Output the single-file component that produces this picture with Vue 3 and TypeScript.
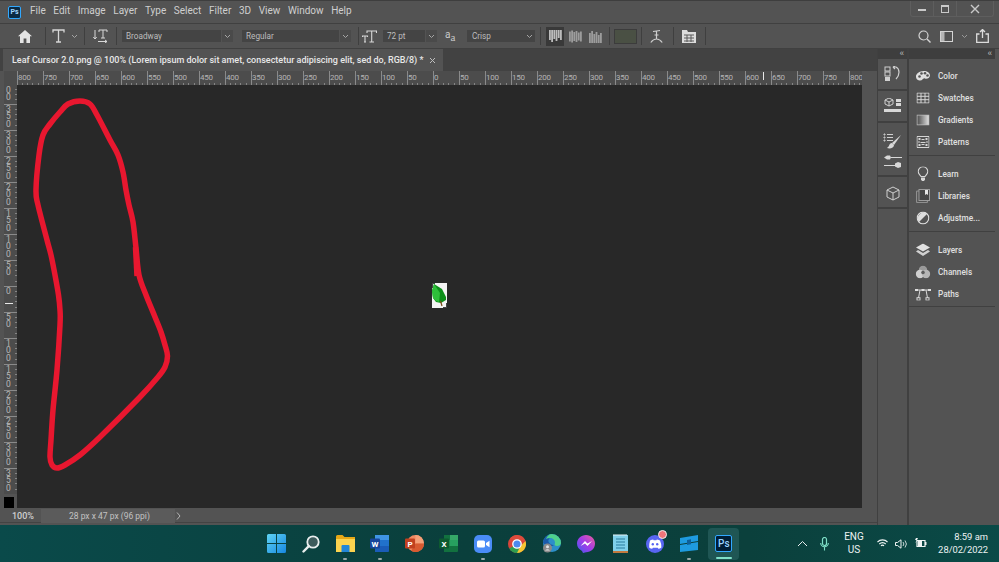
<template>
  <div class="screen">
    <div class="menubar">
      <div class="ps-logo">Ps</div>
      <nav class="menus">
        <span v-for="m in menus" :key="m">{{ m }}</span>
      </nav>
      <div class="winctl">
        <span class="wbtn"><i class="w-min"></i></span>
        <span class="wbtn"><i class="w-max"></i></span>
        <span class="wbtn wide">
          <svg width="10" height="10" viewBox="0 0 10 10"><path d="M1 1l8 8M9 1l-8 8" stroke="#c9c9c9" stroke-width="1.4" /></svg>
        </span>
      </div>
    </div>

    <div class="options">
      <svg class="o-home" width="14" height="13" viewBox="0 0 14 13"><path d="M7 0L0 6.200h2V13h3.600V8.400h2.800V13H12V6.200h2z" fill="#e4e4e4" /></svg>
      <i class="sep s1"></i>
      <svg class="o-t" width="13" height="14" viewBox="0 0 13 14"><path d="M1 3.500V1h11v2.500M6.500 1v12M4 13h5" fill="none" stroke="#d8d8d8" stroke-width="1.300" /></svg>
      <svg class="chev o-tc" width="7" height="5" viewBox="0 0 7 5"><path d="M1 1l2.500 2.500L6 1" fill="none" stroke="#a5a5a5" /></svg>
      <i class="sep s2"></i>
      <svg class="o-it" width="15" height="14" viewBox="0 0 15 14"><path d="M2 1v9M.3 8L2 10l1.700-2M6 3V1h8v2M10 1v8M8 9h4M5 12.500h9M12 11l2 1.500-2 1.500" fill="none" stroke="#d8d8d8" stroke-width="1" /></svg>
      <i class="sep s3"></i>
      <div class="drop d-font"><span>Broadway</span><b><svg width="7" height="5" viewBox="0 0 7 5"><path d="M1 1l2.500 2.500L6 1" fill="none" stroke="#a5a5a5" /></svg></b></div>
      <div class="drop d-style"><span>Regular</span><b><svg width="7" height="5" viewBox="0 0 7 5"><path d="M1 1l2.500 2.500L6 1" fill="none" stroke="#a5a5a5" /></svg></b></div>
      <i class="sep s4"></i>
      <svg class="o-tt" width="15" height="14" viewBox="0 0 15 14"><path d="M5 4V2h9.500v2M9.700 2v11M7.500 13h4.500M.5 8V7h5v1M3 7v6M2 13h2" fill="none" stroke="#d8d8d8" stroke-width="1.100" /></svg>
      <div class="drop d-size"><span>72 pt</span><b><svg width="7" height="5" viewBox="0 0 7 5"><path d="M1 1l2.500 2.500L6 1" fill="none" stroke="#a5a5a5" /></svg></b></div>
      <div class="aa"><span>a</span><span class="aa2">a</span></div>
      <div class="drop d-aa"><span>Crisp</span><b class="plain"><svg width="7" height="5" viewBox="0 0 7 5"><path d="M1 1l2.500 2.500L6 1" fill="none" stroke="#a5a5a5" /></svg></b></div>
      <i class="sep s5"></i>
      <div v-for="(a, i) in aligns" :key="a.name" class="align" :class="{ on: i === 0 }">
        <svg width="13" height="13" viewBox="0 0 13 13">
          <rect v-for="(h, j) in bars" :key="j" :x="j * 2.2" :y="(13 - h) * a.pos" width="1.800" :height="h" :fill="i === 0 ? '#bcbcbc' : '#9c9c9c'" />
        </svg>
      </div>
      <i class="sep s6"></i>
      <div class="swatch"></div>
      <i class="sep s7"></i>
      <svg class="o-warp" width="13" height="15" viewBox="0 0 13 15"><path d="M3 2.500l7-1M6.500 2v8M.8 13.500C3 10.500 5 10 6.500 10s3.500.5 5.700 3.500M4.500 6h4" fill="none" stroke="#cfcfcf" stroke-width="1.200" /></svg>
      <i class="sep s8"></i>
      <svg class="o-pan" width="14" height="13" viewBox="0 0 14 13"><path d="M0 0h5l1 2h8v11H0z" fill="#dcdcdc" /><path d="M2 5h10M2 8h10M2 11h10M5 5v7M9 5v7" stroke="#5a5a5a" /></svg>
      <i class="sep s9"></i>
      <div class="o-right">
        <svg width="13" height="13" viewBox="0 0 13 13"><circle cx="5.500" cy="5.500" r="4.500" fill="none" stroke="#d4d4d4" stroke-width="1.200" /><path d="M9 9l3.500 3.500" stroke="#d4d4d4" stroke-width="1.400" /></svg>
        <svg class="wk" width="13" height="11" viewBox="0 0 13 11"><rect x=".5" y=".5" width="12" height="10" fill="none" stroke="#d4d4d4" /><rect x="1" y="1" width="3.500" height="9" fill="#b5b5b5" /></svg>
        <svg class="wkc" width="7" height="5" viewBox="0 0 7 5"><path d="M1 1l2.500 2.500L6 1" fill="none" stroke="#999" /></svg>
        <svg class="share" width="13" height="14" viewBox="0 0 13 14"><path d="M3.500 5H.7v8.300h11.600V5H9.500M6.500 9V1M4 3l2.500-2.500L9 3" fill="none" stroke="#dcdcdc" stroke-width="1.300" /></svg>
      </div>
    </div>

    <div class="workspace">
      <div class="docarea">
        <div class="tabbar">
          <div class="tab">
            <span>Leaf Cursor 2.0.png @ 100% (Lorem ipsum dolor sit amet, consectetur adipiscing elit, sed do, RGB/8) *</span>
            <svg width="7" height="7" viewBox="0 0 7 7"><path d="M1 1l5 5M6 1L1 6" stroke="#bdbdbd" /></svg>
          </div>
        </div>
        <div class="rulerrow">
          <div class="corner"></div>
          <div class="hruler">
            <span v-for="(n, i) in hLabels" :key="i" class="hcell">{{ n }}</span>
            <i class="hmark"></i>
          </div>
        </div>
        <div class="viewrow">
          <div class="vruler">
            <div class="vticks">
              <div class="vfirst"><span>00</span></div>
              <div v-for="(n, i) in vLabels" :key="i" class="vcell">
                <span>{{ n }}</span>
              </div>
              <i class="vmark"></i>
            </div>
            <div class="fg"></div>
          </div>
          <div class="canvas">
            <svg class="scribble" width="845" height="423" viewBox="17 85 845 423">
              <path :d="curve" fill="none" stroke="#e8172f" stroke-width="5.500" stroke-linejoin="round" />
              <path d="M135.500 247l1.500 29" stroke="#e8172f" stroke-width="5.500" />
            </svg>
            <svg class="cursor-img" width="15" height="25" viewBox="0 0 15 25">
              <rect width="15" height="25" fill="#f4f4f4" />
              <path d="M0 0v5h1V1h2V0zM14 20h1v5h-4v-1h3z" fill="#444" />
              <path d="M2 1l8 5 4 8v3l-5 3-5-1-3-4-1-7z" fill="#0d8f1a" />
              <path d="M2 1l6 9-1 9-3-1-3-3-1-7z" fill="#2ebf3a" />
              <path d="M8.500 18l1.500 5" stroke="#7a4a18" stroke-width="1.200" />
            </svg>
          </div>
          <div class="vgutter"></div>
        </div>
        <div class="statusbar">
          <span class="zoom">100%</span>
          <div class="info">28 px x 47 px (96 ppi)</div>
          <svg width="5" height="8" viewBox="0 0 5 8"><path d="M1 .5L4 4 1 7.500" fill="none" stroke="#b5b5b5" /></svg>
        </div>
      </div>

      <aside class="dock">
        <div class="collapse"><span>‹‹</span></div>
        <div class="icongroup g1">
          <svg width="18" height="16" viewBox="0 0 18 16">
            <rect x="1" y="1" width="5" height="4" fill="none" stroke="#d0d0d0" />
            <rect x="1" y="6" width="5" height="4" fill="none" stroke="#d0d0d0" />
            <rect x="1" y="11" width="5" height="4" fill="#d0d0d0" />
            <path d="M9 1h3c4 2 4 8 0 12M9 1l2-1M9 1l2 2" fill="none" stroke="#d0d0d0" stroke-width="1.200" />
          </svg>
        </div>
        <div class="icongroup g2">
          <svg width="19" height="16" viewBox="0 0 19 16">
            <path d="M6 0l4 2v4L6 8 2 6V2zM2 2l4 2 4-2M6 4v4" fill="none" stroke="#d0d0d0" />
            <rect x="13" y="1" width="5" height="3" fill="#d8d8d8" />
            <rect x="13" y="5" width="5" height="3" fill="#d8d8d8" />
            <rect x="1" y="11" width="17" height="3" fill="#d8d8d8" />
          </svg>
        </div>
        <div class="icongroup g3">
          <svg width="19" height="16" viewBox="0 0 19 16">
            <path d="M1 1h1v1H1zM1 4h1v1H1zM1 7h1v1H1zM4 1.500h6M4 4.500h6M4 7.500h6" stroke="#d0d0d0" />
            <path d="M18 2l-9 8 2 2z" fill="#d8d8d8" />
            <path d="M9 10c-2 0-3 2-3 3l-2 2c3 1 7 0 7-3z" fill="#d8d8d8" />
          </svg>
          <svg width="19" height="15" viewBox="0 0 19 15">
            <path d="M1 3.500l3-2h3l1 2-1 2H4zM8 3h11v1H8zM1 11h11v1H1z" fill="#d8d8d8" />
            <path d="M12 9.500l3-1.500 3 1v4l-3 1-3-1.500z" fill="#d8d8d8" />
          </svg>
        </div>
        <div class="icongroup g4">
          <svg width="14" height="15" viewBox="0 0 14 15"><path d="M7 1l6 3v7l-6 3-6-3V4zM1 4l6 3 6-3M7 7v7" fill="none" stroke="#d0d0d0" /></svg>
        </div>
        <div class="icongroup grow"></div>
      </aside>

      <aside class="panels">
        <div class="collapse"><span>‹‹</span></div>
        <section class="pgroup p1">
          <div class="prow">
            <svg width="15" height="11" viewBox="0 0 15 11"><path d="M8 .5c4 0 6.500 2 6.500 4.500S11 9 9.500 8 7 10.500 4 10 .5 7.500.5 5.500 4 .5 8 .5z" fill="#e0e0e0" /><circle cx="4" cy="6" r="1.300" fill="#555" /><circle cx="6" cy="3" r="1.300" fill="#555" /><circle cx="9.500" cy="2.800" r="1.300" fill="#555" /><circle cx="12" cy="5" r="1.300" fill="#555" /></svg>
            <span>Color</span>
          </div>
          <div class="prow">
            <svg width="13" height="11" viewBox="0 0 13 11"><path d="M.5.500h12v10H.500zM.5 3.800h12M.5 7.200h12M4.500.5v10M8.500.5v10" fill="none" stroke="#d5d5d5" /></svg>
            <span>Swatches</span>
          </div>
          <div class="prow">
            <svg width="13" height="11" viewBox="0 0 13 11"><defs><linearGradient id="gr" x1="0" x2="1"><stop offset="0" stop-color="#4a4a4a" /><stop offset="1" stop-color="#e2e2e2" /></linearGradient></defs><rect x=".5" y=".5" width="12" height="10" fill="url(#gr)" stroke="#bcbcbc" /></svg>
            <span>Gradients</span>
          </div>
          <div class="prow">
            <svg width="13" height="12" viewBox="0 0 13 12"><path d="M.5.500h12v11H.500z" fill="none" stroke="#d5d5d5" /><path d="M2 2h2v2H2zM5 3h3v1H5zM9 2h2v2H9zM2 5h1v2H2zM4 6h5v1H4zM10 5h1v2h-1zM2 8h2v2H2zM5 8h3v1H5zM9 8h2v2H9z" fill="#d5d5d5" /></svg>
            <span>Patterns</span>
          </div>
        </section>
        <section class="pgroup p2">
          <div class="prow">
            <svg width="11" height="15" viewBox="0 0 11 15"><path d="M3.500 10C2 8 .7 7.200.7 5a4.800 4.800 0 0 1 9.600 0C10.300 7.200 9 8 7.500 10z" fill="none" stroke="#d8d8d8" stroke-width="1.100" /><path d="M3.500 11h4v2l-1 1.500h-2l-1-1.500z" fill="#d8d8d8" /></svg>
            <span>Learn</span>
          </div>
          <div class="prow">
            <svg width="14" height="14" viewBox="0 0 14 14"><rect x=".5" y="2" width="11" height="11.500" rx="1" fill="none" stroke="#8f8f8f" stroke-width="1.200" /><rect x="3" y=".5" width="10.500" height="11" fill="#454545" stroke="#9c9c9c" /><path d="M9 1h3v5l-1.500-1L9 6z" fill="#e4e4e4" /></svg>
            <span>Libraries</span>
          </div>
          <div class="prow">
            <svg width="13" height="13" viewBox="0 0 13 13"><circle cx="6.500" cy="6.500" r="5.800" fill="none" stroke="#dedede" stroke-width="1.200" /><path d="M10.500 2.500a5.700 5.700 0 0 0-8 8z" fill="#dedede" /></svg>
            <span>Adjustme...</span>
          </div>
        </section>
        <section class="pgroup p3">
          <div class="prow">
            <svg width="14" height="13" viewBox="0 0 14 13"><path d="M7 0l7 4-7 4-7-4z" fill="#e0e0e0" /><path d="M2 6.500L0 8l7 4.500L14 8l-2-1.500-5 3z" fill="#d0d0d0" /></svg>
            <span>Layers</span>
          </div>
          <div class="prow">
            <svg width="15" height="13" viewBox="0 0 15 13"><circle cx="7.500" cy="4.500" r="4.200" fill="#9a9a9a" /><circle cx="4.500" cy="8.500" r="4.200" fill="#cfcfcf" /><circle cx="10.500" cy="8.500" r="4.200" fill="#b5b5b5" /><circle cx="7.500" cy="7" r="1.800" fill="#5d5d5d" /></svg>
            <span>Channels</span>
          </div>
          <div class="prow">
            <svg width="17" height="13" viewBox="0 0 17 13"><path d="M2 2.500h13M5.500 2.500L4 10.500M11.500 2.500l1.500 8" fill="none" stroke="#d8d8d8" /><path d="M.5 1.500h3v2h-3zM7 1.500h3v2H7zM13.500 1.500h3v2h-3z" fill="#e0e0e0" /><rect x="2.500" y="10.200" width="3" height="2.500" fill="none" stroke="#d8d8d8" /><rect x="11.500" y="10.200" width="3" height="2.500" fill="none" stroke="#d8d8d8" /></svg>
            <span>Paths</span>
          </div>
        </section>
        <section class="pgroup grow"></section>
      </aside>
    </div>

    <footer class="taskbar">
      <div class="apps">
        <div class="app">
          <svg width="19" height="19" viewBox="0 0 19 19"><defs><linearGradient id="win" x1="0" y1="0" x2="1" y2="1"><stop offset="0" stop-color="#5fd4f4" /><stop offset="1" stop-color="#1787e0" /></linearGradient></defs><path d="M0 1.500Q0 0 1.500 0H9v9H0zM10 0h7.500Q19 0 19 1.500V9h-9zM0 10h9v9H1.500Q0 19 0 17.500zM10 10h9v7.500q0 1.500-1.500 1.500H10z" fill="url(#win)" /></svg>
        </div>
        <div class="app">
          <svg width="18" height="18" viewBox="0 0 18 18"><circle cx="11" cy="7" r="5.700" fill="#3d5b5c" stroke="#e9eeee" stroke-width="1.800" /><path d="M6.800 11.200L1.500 16.500" stroke="#e9eeee" stroke-width="2.400" stroke-linecap="round" /></svg>
        </div>
        <div class="app dot">
          <svg width="19" height="17" viewBox="0 0 19 17"><path d="M0 1.500Q0 0 1.500 0h5l2 2H19v3H0z" fill="#e6a817" /><path d="M0 4h19v13H0z" fill="#fcd34f" /><path d="M6.500 10h6q1 0 1 1v6h-8v-6q0-1 1-1z" fill="#2186d8" /></svg>
        </div>
        <div class="app dot">
          <svg width="19" height="17" viewBox="0 0 19 17"><path d="M5 0h13a1 1 0 0 1 1 1v15a1 1 0 0 1-1 1H5z" fill="#1a5cb8" /><path d="M5 0h14v5H5z" fill="#3f95e4" /><path d="M5 5h14v6H5z" fill="#2172cc" /><rect y="3.500" width="10" height="10" rx="1" fill="#16459a" /><text x="5" y="11.500" class="ti">W</text></svg>
        </div>
        <div class="app">
          <svg width="19" height="17" viewBox="0 0 19 17"><circle cx="10.500" cy="8.500" r="8.500" fill="#ee8a63" /><path d="M10.500 0a8.500 8.500 0 0 1 8.500 8.500h-8.500z" fill="#f4a078" /><path d="M10.500 8.500H19A8.500 8.500 0 0 1 6 15.700z" fill="#d85a30" /><rect y="3.500" width="10" height="10" rx="1" fill="#c1401f" /><text x="5" y="11.500" class="ti">P</text></svg>
        </div>
        <div class="app">
          <svg width="19" height="17" viewBox="0 0 19 17"><path d="M5 0h13a1 1 0 0 1 1 1v15a1 1 0 0 1-1 1H5z" fill="#12713f" /><path d="M11 0h8v5h-8z" fill="#35a868" /><path d="M5 5h6v6H5z" fill="#1d8a50" /><path d="M11 5h8v6h-8z" fill="#27a05f" /><rect y="3.500" width="10" height="10" rx="1" fill="#0d5a30" /><text x="5" y="11.500" class="ti">X</text></svg>
        </div>
        <div class="app dot">
          <svg width="18" height="18" viewBox="0 0 18 18"><rect width="18" height="18" rx="5" fill="#4a8cf7" /><rect x="3" y="5.500" width="8" height="7" rx="1.500" fill="#fff" /><path d="M12 8l3.500-2.200v6.400L12 10z" fill="#fff" /></svg>
        </div>
        <div class="app">
          <svg width="18" height="18" viewBox="0 0 18 18"><circle cx="9" cy="9" r="9" fill="#d8453a" /><path d="M9 9L1.200 13.500A9 9 0 0 0 9 18c1 0 2-.2 3-.5z" fill="#2f9e4f" /><path d="M9 0a9 9 0 0 1 8.500 6H9L2 4A9 9 0 0 1 9 0z" fill="#dd4b3c" /><path d="M17.500 6A9 9 0 0 1 9 18l3.500-7z" fill="#f5c533" /><circle cx="9" cy="9" r="4.200" fill="#4b8af0" stroke="#fff" stroke-width="1.300" /></svg>
        </div>
        <div class="app">
          <svg width="20" height="19" viewBox="0 0 20 19"><circle cx="10" cy="9" r="9" fill="#2c8fc9" /><path d="M1 9a9 9 0 0 1 17-4c-3-2-9-3-11 0s1 5 4 6-6 2-10-2z" fill="#1b5aa8" /><path d="M10 0a9 9 0 0 1 9 9c0 2-2 3-4 3s-3-1-2-3c0-5-5-6-9-4 1-3 3-5 6-5z" fill="#4fd08c" /><circle cx="5.500" cy="14" r="4.500" fill="#8a8a8a" /><circle cx="5.500" cy="12.800" r="1.500" fill="#e4e4e4" /><path d="M3 16.500q2.500-2.500 5 0" fill="#e4e4e4" /></svg>
        </div>
        <div class="app">
          <svg width="18" height="18" viewBox="0 0 18 18"><defs><linearGradient id="ms" x1="0" y1="1" x2="1" y2="0"><stop offset="0" stop-color="#3f5bf0" /><stop offset=".5" stop-color="#a23ce8" /><stop offset="1" stop-color="#ef5f9a" /></linearGradient></defs><path d="M9 0c5 0 9 3.700 9 8.600s-4 8.600-9 8.600l-3 .8-1-2C2 14.500 0 12 0 8.600 0 3.700 4 0 9 0z" fill="url(#ms)" /><path d="M3.500 11L8 6l2.500 2.500L15 6l-4.500 5L8 8.500z" fill="#fff" /></svg>
        </div>
        <div class="app">
          <svg width="15" height="19" viewBox="0 0 15 19"><rect y="1" width="15" height="16" fill="#7fd0ea" /><rect y="17" width="15" height="2" fill="#c27a3f" /><path d="M3 5h9M3 8h9M3 11h9M3 14h9" stroke="#2b7d9e" /><path d="M1 0v2M3 0v2M5 0v2M7 0v2M9 0v2M11 0v2M13 0v2" stroke="#e8f4f8" /></svg>
        </div>
        <div class="app">
          <span class="badge"></span>
          <svg width="18" height="18" viewBox="0 0 18 18"><circle cx="9" cy="9" r="9" fill="#5865f2" /><path d="M4 5.500q2-1 3.200-1l.4.700h2.800l.4-.7q1.200 0 3.200 1 1.600 3.500 1.400 7-1.500 1.200-3 1.300l-.7-1.100H6.900l-.7 1.100q-1.500-.1-3-1.300Q3 9 4 5.500z" fill="#fff" /><circle cx="6.800" cy="9.300" r="1.200" fill="#5865f2" /><circle cx="11.200" cy="9.300" r="1.200" fill="#5865f2" /></svg>
        </div>
        <div class="app dot">
          <svg width="18" height="17" viewBox="0 0 18 17"><path d="M0 3l18-3v6L9 7.500 0 9zM0 10l9-1.500 9-1.500v8L0 17z" fill="#1e9be0" /><path d="M7 5l4-.7v5L7 10z" fill="#0d5f9a" /></svg>
        </div>
        <div class="app active">
          <div class="ps-task">Ps</div>
          <i class="underline"></i>
        </div>
      </div>
      <div class="tray">
        <svg class="t-chev" width="11" height="7" viewBox="0 0 11 7"><path d="M1 6l4.500-4.500L10 6" fill="none" stroke="#e8eeee" /></svg>
        <svg class="t-mic" width="9" height="14" viewBox="0 0 9 14"><rect x="2.500" y=".5" width="4" height="8" rx="2" fill="none" stroke="#7fe0c8" stroke-width="1.200" /><path d="M.7 6a3.800 3.800 0 0 0 7.600 0M4.500 10v3.500" fill="none" stroke="#7fe0c8" stroke-width="1.100" /></svg>
        <div class="lang"><span>ENG</span><span>US</span></div>
        <svg class="t-wifi" width="11" height="9" viewBox="0 0 11 9"><path d="M.5 3a7 7 0 0 1 10 0M2.300 5a4.500 4.500 0 0 1 6.400 0M4 6.800a2 2 0 0 1 3 0" fill="none" stroke="#f0f4f4" stroke-width="1.100" /></svg>
        <svg class="t-vol" width="12" height="10" viewBox="0 0 12 10"><path d="M.5 3.500h2L6 .8v8.400L2.500 6.500h-2z" fill="none" stroke="#f0f4f4" /><path d="M8 3a3 3 0 0 1 0 4M10 1.500a5.500 5.500 0 0 1 0 7" fill="none" stroke="#dfe6e6" stroke-width=".9" /></svg>
        <svg class="t-bat" width="13" height="11" viewBox="0 0 13 11"><path d="M3 2.500h8v6H3z" fill="none" stroke="#f0f4f4" stroke-width="1.200" /><rect x="11" y="4" width="1.500" height="3" fill="#f0f4f4" /><path d="M2 0L1 2h2L1 5l3-3H3l1-2z" fill="#f0f4f4" /><rect x="4" y="3" width="4" height="5" fill="#f0f4f4" /></svg>
        <div class="clock"><span>8:59 am</span><span>28/02/2022</span></div>
      </div>
    </footer>
  </div>
</template>

<script setup lang="ts">
import { computed } from "vue";

const menus = ["File", "Edit", "Image", "Layer", "Type", "Select", "Filter", "3D", "View", "Window", "Help"];

const aligns = [
  { name: "left", pos: 0 },
  { name: "center", pos: 0.5 },
  { name: "right", pos: 1 },
];
const bars = [10, 12, 9, 11, 8, 10];

const hLabels: number[] = [];
for (let v = -800; v <= 800; v += 50) hLabels.push(Math.abs(v));

const vLabels = ["350", "300", "250", "200", "150", "100", "50", "0", "50", "100", "150", "200", "250", "300", "350"];

// hand-traced points of the red loop, in page coordinates
const points: [number, number][] = [
  [80, 101], [90, 104], [97, 115], [110, 140], [118, 155], [123, 172], [126, 190],
  [129, 205], [133, 222], [136, 248], [139, 275], [146, 295], [155, 317], [161, 332],
  [165, 345], [167.5, 356], [165, 367], [158, 377], [140, 397], [100, 437], [80, 455],
  [65, 465], [57, 468], [52, 465], [50, 457], [51, 440], [53, 410], [57, 370],
  [60, 325], [60, 310], [58.5, 295], [55, 275], [51, 255], [47, 240], [38, 205],
  [36, 190], [39, 155], [43, 135], [50, 124], [60, 112], [68, 104],
];

const curve = computed(() => {
  const n = points.length;
  let d = `M${points[0][0]} ${points[0][1]}`;
  for (let i = 0; i < n; i++) {
    const [p0, p1, p2, p3] = [points[(i + n - 1) % n], points[i], points[(i + 1) % n], points[(i + 2) % n]];
    const c1 = [p1[0] + (p2[0] - p0[0]) / 6, p1[1] + (p2[1] - p0[1]) / 6];
    const c2 = [p2[0] - (p3[0] - p1[0]) / 6, p2[1] - (p3[1] - p1[1]) / 6];
    d += `C${c1[0]} ${c1[1]} ${c2[0]} ${c2[1]} ${p2[0]} ${p2[1]}`;
  }
  return d + "Z";
});
</script>

<style>
html,
body {
  margin: 0;
  overflow: hidden;
}
</style>

<style scoped>
.screen {
  width: 999px;
  height: 562px;
  display: flex;
  flex-direction: column;
  overflow: hidden;
  background: #535353;
  font-family: Roboto, "Open Sans", sans-serif;
  color: #d6d6d6;
}

/* menu bar */
.menubar {
  height: 23px;
  flex: none;
  display: flex;
  align-items: flex-start;
  background: #535353;
  box-sizing: border-box;
  border-top: 1px solid #3e3e3e;
}
.ps-logo {
  width: 11px;
  height: 11px;
  margin: 5px 0 0 8px;
  background: #0b2b45;
  border: 1px solid #31a8ff;
  border-radius: 2px;
  font-size: 7px;
  line-height: 10px;
  text-align: center;
  font-weight: 700;
  color: #a8d8ff;
}
.menus {
  display: flex;
  gap: 7.600px;
  margin: 3px 0 0 9px;
  font-size: 10px;
  line-height: 14px;
  color: #cfcfcf;
}
.winctl {
  margin-left: auto;
  margin-right: 5px;
  display: flex;
  height: 15px;
  border: 1px solid #5e5e5e;
  border-top: 0;
  border-radius: 0 0 3px 3px;
}
.wbtn {
  width: 22px;
  display: flex;
  align-items: center;
  justify-content: center;
  border-right: 1px solid #5e5e5e;
}
.wbtn.wide {
  width: 36px;
  border-right: 0;
}
.w-min {
  width: 8px;
  height: 2px;
  margin-top: 3px;
  background: #c9c9c9;
}
.w-max {
  width: 6px;
  height: 5px;
  border: 1px solid #c9c9c9;
  border-top-width: 2px;
}

/* options bar */
.options {
  height: 26px;
  flex: none;
  box-sizing: border-box;
  display: flex;
  align-items: center;
  background: #535353;
  border-top: 1px solid #404040;
  border-bottom: 1px solid #404040;
}
.sep {
  width: 1px;
  height: 18px;
  background: #3f3f3f;
  flex: none;
}
.o-home { margin-left: 18px; }
.s1 { margin-left: 13px; }
.o-t { margin-left: 6px; }
.o-tc { margin-left: 6px; }
.s2 { margin-left: 6px; }
.o-it { margin-left: 8px; }
.s3 { margin-left: 8px; }
.drop {
  height: 12px;
  display: flex;
  align-items: center;
  flex: none;
  gap: 1px;
  font-size: 8.200px;
  color: #bdbdbd;
}
.drop span {
  flex: 1;
  height: 100%;
  line-height: 12px;
  padding-left: 4px;
  background: #444;
}
.drop b {
  width: 11px;
  height: 100%;
  background: #4a4a4a;
  display: flex;
  align-items: center;
  justify-content: center;
}
.drop b.plain {
  background: #444;
  margin-left: -1px;
}
.d-font { width: 111px; margin-left: 5px; }
.d-style { width: 109px; margin-left: 9px; }
.s4 { margin-left: 7px; }
.o-tt { margin-left: 3px; }
.d-size { width: 54px; margin-left: 6px; }
.aa {
  margin-left: 8px;
  width: 16px;
  font-size: 10px;
  color: #c9c9c9;
  line-height: 12px;
  display: flex;
}
.aa2 {
  margin-top: 2px;
  font-family: "Liberation Serif", serif;
  font-size: 11px;
}
.d-aa { width: 68px; margin-left: 6px; }
.d-aa span { padding-left: 5px; }
.s5 { margin-left: 5px; }
.align {
  width: 18px;
  height: 19px;
  margin-left: 2px;
  display: flex;
  align-items: center;
  justify-content: center;
}
.align.on { background: #393939; margin-left: 5px; }
.s6 { margin-left: 5px; }
.swatch {
  width: 21px;
  height: 13px;
  margin-left: 4px;
  background: #4a5044;
  border: 1px solid #3c3c3c;
  flex: none;
}
.s7 { margin-left: 4px; }
.o-warp { margin-left: 8px; }
.s8 { margin-left: 10px; }
.o-pan { margin-left: 8px; }
.s9 { margin-left: 9px; }
.o-right {
  margin-left: auto;
  margin-right: 10px;
  display: flex;
  align-items: center;
}
.wk { margin-left: 9px; }
.wkc { margin-left: 8px; }
.share { margin-left: 8px; }

/* document area */
.workspace {
  flex: 1;
  min-height: 0;
  display: flex;
  background: #404040;
}
.docarea {
  width: 877px;
  flex: none;
  display: flex;
  flex-direction: column;
  background: #535353;
}
.tabbar {
  height: 22px;
  flex: none;
  background: #424242;
  padding-left: 3px;
}
.tab {
  width: 440px;
  height: 22px;
  box-sizing: border-box;
  padding-left: 9px;
  display: flex;
  align-items: center;
  gap: 6px;
  background: #535353;
  font-size: 9px;
  font-weight: 500;
  color: #e8e8e8;
  white-space: nowrap;
}
.rulerrow {
  height: 14px;
  flex: none;
  display: flex;
  padding-left: 4px;
}
.corner {
  width: 13px;
  flex: none;
  background: #4c4c4c;
}
.hruler {
  position: relative;
  width: 845px;
  display: flex;
  overflow: hidden;
  background-color: #4c4c4c;
}
.hcell {
  width: 26px;
  flex: none;
  box-sizing: border-box;
  border-left: 1px solid #8a8a8a;
  font-size: 8px;
  letter-spacing: -0.2px;
  line-height: 14px;
  color: #b4b4b4;
  background: repeating-linear-gradient(90deg, transparent 0 4px, #858585 4px 5px, transparent 5px 5.200px) 0 12px / 100% 2px no-repeat;
}
.hmark {
  position: absolute;
  left: 746px;
  top: 1px;
  width: 1px;
  height: 8px;
  background: #e8e8e8;
}
.viewrow {
  flex: 1;
  min-height: 0;
  display: flex;
  padding-left: 4px;
}
.vruler {
  width: 13px;
  flex: none;
  display: flex;
  flex-direction: column;
}
.vticks {
  position: relative;
  height: 409px;
  flex: none;
  overflow: hidden;
  background: #4c4c4c;
}
.vmark {
  position: absolute;
  left: 1px;
  top: 218px;
  width: 8px;
  height: 1px;
  background: #e8e8e8;
}
.vfirst,
.vcell {
  box-sizing: border-box;
  font-size: 8.500px;
  line-height: 7.400px;
  color: #b8b8b8;
  padding-left: 2px;
  background: repeating-linear-gradient(180deg, transparent 0 4px, #858585 4px 5px, transparent 5px 5.200px) right 0 / 2px 100% no-repeat;
}
.vfirst span,
.vcell span {
  display: block;
  width: 6px;
  word-break: break-all;
}
.vfirst {
  height: 19px;
  padding-top: 2px;
}
.vcell {
  height: 26px;
  border-top: 1px solid #8a8a8a;
  padding-top: 1px;
}
.fg {
  flex: 1;
  background: linear-gradient(#535353 3px, #000 3px);
  width: 10px;
}
.canvas {
  width: 845px;
  flex: none;
  position: relative;
  background: #282828;
}
.scribble {
  position: absolute;
  left: 0;
  top: 0;
}
.cursor-img {
  position: absolute;
  left: 415px;
  top: 198px;
}
.vgutter {
  flex: 1;
}
.statusbar {
  height: 17px;
  flex: none;
  box-sizing: border-box;
  padding-bottom: 2px;
  display: flex;
  align-items: center;
  box-shadow: inset 0 -2px 0 #535353, inset 0 -3px 0 #434343;
  font-size: 8.500px;
  color: #cfcfcf;
}
.zoom {
  width: 41px;
  padding-left: 12px;
  box-sizing: border-box;
  flex: none;
  font-size: 9px;
  font-weight: 500;
}
.info {
  width: 134px;
  height: 14px;
  box-sizing: border-box;
  padding-left: 28px;
  line-height: 14px;
  background: #5b5b5b;
  color: #c2c2c2;
}
.statusbar svg {
  margin-left: 1px;
}

/* right docks */
.dock {
  width: 29px;
  flex: none;
  margin-left: 1px;
  display: flex;
  flex-direction: column;
  gap: 2px;
}
.panels {
  width: 86px;
  flex: none;
  margin-left: 2px;
  display: flex;
  flex-direction: column;
  gap: 1px;
  box-shadow: 4px 0 0 #535353;
}
.collapse {
  height: 10px;
  flex: none;
  background: #3e3e3e;
  font-size: 9px;
  line-height: 8px;
  text-align: right;
  padding-right: 4px;
  color: #bdbdbd;
  letter-spacing: -1px;
}
.dock .collapse {
  margin-bottom: -2px;
}
.panels .collapse {
  margin-bottom: -1px;
}
.icongroup {
  background: #535353;
  box-sizing: border-box;
  display: flex;
  flex-direction: column;
  align-items: center;
  justify-content: center;
  gap: 5px;
}
.g1 { height: 30px; }
.g2 { height: 30px; }
.g3 { height: 52px; padding-top: 4px; }
.g4 { height: 30px; padding-top: 3px; }
.grow { flex: 1; }
.pgroup {
  background: #535353;
  box-sizing: border-box;
}
.p1 { height: 96px; padding-top: 6px; }
.p2 { height: 75px; padding-top: 7px; }
.p3 { height: 74px; padding-top: 7px; }
.prow {
  height: 22px;
  display: flex;
  align-items: center;
  font-size: 8.200px;
  font-weight: 500;
  color: #e0e0e0;
  position: relative;
  padding-left: 29px;
}
.prow svg {
  position: absolute;
  left: 14px;
  top: 50%;
  transform: translate(-50%, -50%);
}

/* taskbar */
.taskbar {
  height: 37px;
  flex: none;
  position: relative;
  display: flex;
  align-items: center;
  background: linear-gradient(90deg, #0a4a4a 0%, #0a3f3c 45%, #0b403c 75%, #0a4a47 100%);
  color: #eef3f3;
}
.apps {
  display: flex;
  margin-left: 259.500px;
}
.app {
  width: 34.400px;
  height: 37px;
  display: flex;
  align-items: center;
  justify-content: center;
  position: relative;
}
.dot::after {
  content: "";
  position: absolute;
  left: 50%;
  bottom: 2px;
  width: 4px;
  height: 2px;
  margin-left: -2px;
  border-radius: 1px;
  background: #9aa9a9;
}
.ti {
  font: 700 8px Roboto, sans-serif;
  fill: #fff;
  text-anchor: middle;
}
.badge {
  position: absolute;
  right: 5px;
  top: 5px;
  width: 9px;
  height: 9px;
  border-radius: 50%;
  background: #f0757a;
  border: 1px solid #f0f0f0;
  z-index: 1;
  box-sizing: border-box;
}
.active::before {
  content: "";
  position: absolute;
  inset: 3px 2px 2px 1px;
  background: #1f5654;
  border-radius: 4px;
}
.ps-task {
  position: relative;
  width: 17px;
  height: 17px;
  box-sizing: border-box;
  background: #001e36;
  border: 1px solid #31a8ff;
  border-radius: 2px;
  color: #9ad4ff;
  font-size: 10px;
  line-height: 15px;
  text-align: center;
  font-weight: 500;
}
.underline {
  position: absolute;
  left: 9px;
  right: 9px;
  bottom: 3px;
  height: 2px;
  border-radius: 1px;
  background: #7fe0c8;
}
.tray {
  margin-left: auto;
  margin-right: 11px;
  display: flex;
  align-items: center;
}
.lang,
.clock {
  display: flex;
  flex-direction: column;
  font-size: 10px;
  line-height: 12.500px;
}
.lang {
  align-items: center;
  margin-left: 12px;
  width: 26px;
}
.clock {
  align-items: flex-end;
  margin-left: 3px;
  width: 58px;
  font-size: 9.400px;
}
.t-wifi { margin-left: 10px; }
.t-vol { margin-left: 7px; }
.t-bat { margin-left: 7px; }
.t-mic { margin-left: 12px; }
</style>
